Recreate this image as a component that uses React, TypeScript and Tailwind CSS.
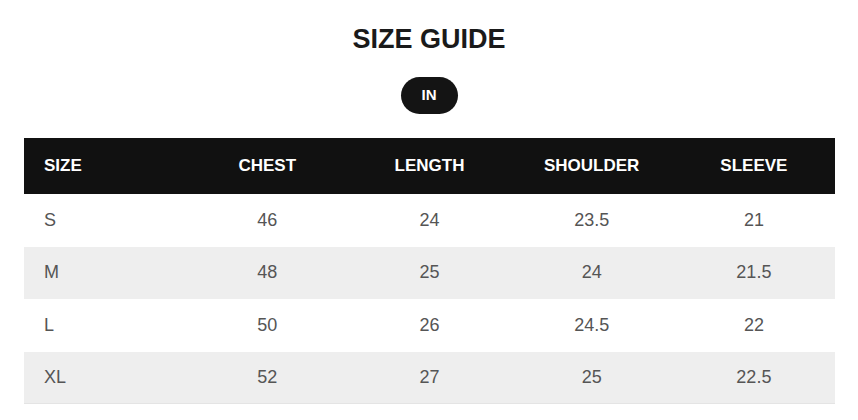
import React from 'react'

const headers = ['SIZE', 'CHEST', 'LENGTH', 'SHOULDER', 'SLEEVE']

const rows = [
  ['S', '46', '24', '23.5', '21'],
  ['M', '48', '25', '24', '21.5'],
  ['L', '50', '26', '24.5', '22'],
  ['XL', '52', '27', '25', '22.5'],
]

export default function App() {
  return (
    <div className="w-[858px] h-[420px] bg-white overflow-hidden font-['Liberation_Sans',Arial,sans-serif]">
      {/* Titre */}
      <h1 className="pt-[24px] text-center text-[27px] leading-[30px] font-bold text-[#1a1a1a]">SIZE GUIDE</h1>

      {/* Unité */}
      <div className="flex justify-center mt-[23px]">
        <span className="w-[57px] h-[37px] rounded-full bg-[#141414] text-white text-[15px] font-bold flex items-center justify-center">
          IN
        </span>
      </div>

      {/* Tableau */}
      <div className="mx-[24px] mt-[24px] w-[811px]">
        <div className="grid grid-cols-5 h-[56px] bg-[#111111] text-white text-[17px] font-bold items-center">
          {headers.map((h, i) => (
            <div key={h} className={i === 0 ? 'pl-[20px]' : 'text-center'}>
              {h}
            </div>
          ))}
        </div>
        {rows.map((r, ri) => (
          <div
            key={r[0]}
            className={`grid grid-cols-5 h-[52.5px] items-center text-[18px] text-[#555555] ${
              ri % 2 === 1 ? 'bg-[#eeeeee]' : 'bg-white'
            } ${ri === rows.length - 1 ? 'border-b border-[#e4e4e4]' : ''}`}
          >
            {r.map((c, ci) => (
              <div key={ci} className={ci === 0 ? 'pl-[20px]' : 'text-center'}>
                {c}
              </div>
            ))}
          </div>
        ))}
      </div>
    </div>
  )
}
